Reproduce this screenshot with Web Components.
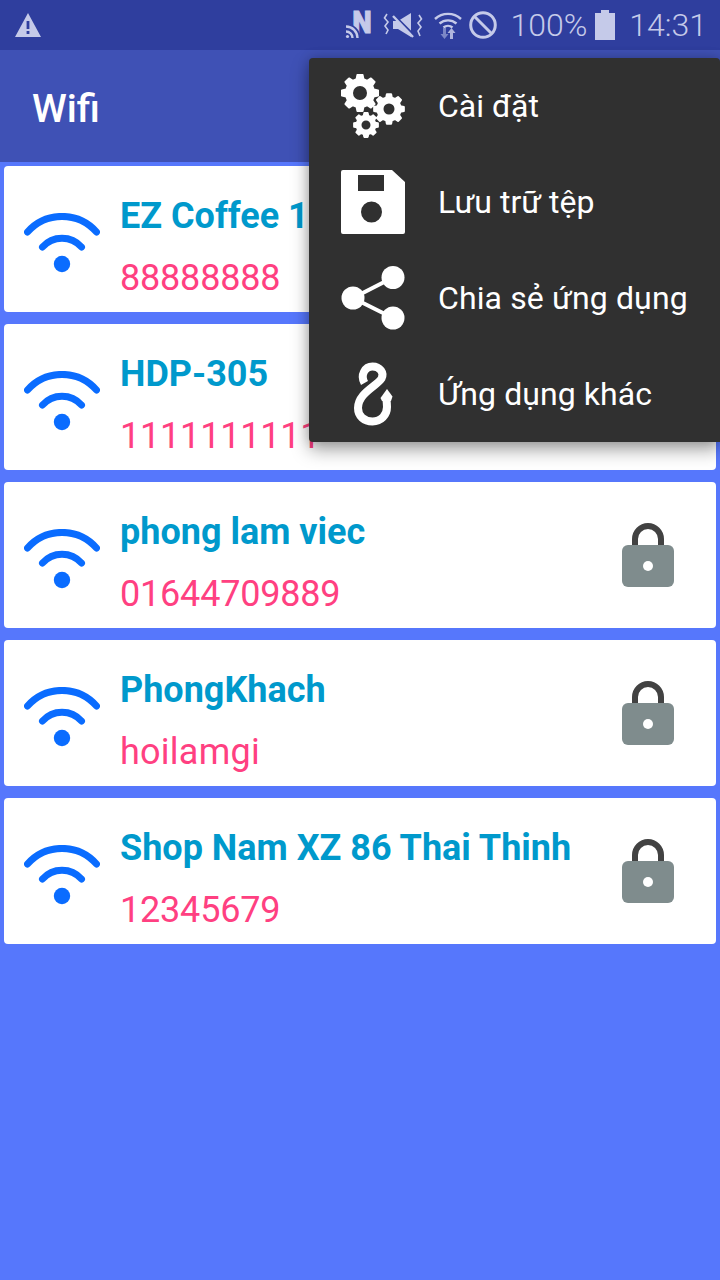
<!DOCTYPE html>
<html><head><meta charset="utf-8"><title>Wifi</title>
<style>
html,body{margin:0;padding:0;background:#5677fc}
body{width:720px;height:1280px;overflow:hidden;position:relative;font-family:Roboto,"Liberation Sans",sans-serif}
</style></head><body>
<wifi-app></wifi-app>
<script>
function gear(cx,cy,r,hole,teeth){
  const inner=r*0.78;let d='';const n=teeth;
  for(let i=0;i<n;i++){
    const a=i/n*Math.PI*2, w=Math.PI/n;
    const p=[[inner,a-w*.62],[r,a-w*.36],[r,a+w*.36],[inner,a+w*.62]];
    p.forEach((q,j)=>{d+=(i==0&&j==0?'M':'L')+(cx+q[0]*Math.cos(q[1])).toFixed(2)+' '+(cy+q[0]*Math.sin(q[1])).toFixed(2)});
  }
  d+='Z M'+(cx+hole)+' '+cy+'a'+hole+' '+hole+' 0 1 0 '+(-2*hole)+' 0a'+hole+' '+hole+' 0 1 0 '+(2*hole)+' 0Z';
  return d;
}
const ICONS={
 gears:`<svg width="64" height="64" viewBox="341 74 64 64"><path fill="#fff" fill-rule="evenodd" stroke="#fff" stroke-width="2" stroke-linejoin="round" d="${gear(360,93,18.2,8,8)} ${gear(389,109,15,6.5,8)} ${gear(366,125,12,5.5,8)}"/></svg>`,
 save:`<svg width="64" height="64" viewBox="341 170 64 64"><path fill="#fff" fill-rule="evenodd" d="M343 170H392L405 182V232a2 2 0 0 1-2 2H343a2 2 0 0 1-2-2V172a2 2 0 0 1 2-2Z M358 175V191H384V175Z M382 212a10.5 10.5 0 1 0-21 0a10.5 10.5 0 1 0 21 0Z"/></svg>`,
 share:`<svg width="64" height="64" viewBox="341 266 64 64"><g fill="#fff"><circle cx="393" cy="277.500" r="11.500"/><circle cx="353" cy="298" r="11.500"/><circle cx="393" cy="318" r="11.500"/></g><path d="M393 277.500L353 298L393 318" fill="none" stroke="#fff" stroke-width="4"/></svg>`,
 hook:`<svg width="64" height="64" viewBox="341 362 64 64"><path fill="none" stroke="#fff" stroke-width="8" d="M364.500 383C360 375 365 366.500 372.500 366.500C380 366.500 384.500 373 381.500 378.500C377 386 358 393 358 408C358 416 364 421.500 372.500 421.500C381 421.500 387 415 387 407C387 403 386.500 400 386 396"/><path fill="#fff" d="M380.500 398L387 389L392.500 396.500L391 401H382Z"/></svg>`,
 wifi:`<svg width="76" height="60" viewBox="0 0 76 60"><g fill="none" stroke="#0a6cff" stroke-width="7" stroke-linecap="round"><path d="M3.500 19A46 46 0 0 1 72.500 19"/><path d="M18.500 34A26 26 0 0 1 57.500 34"/></g><circle cx="38" cy="51" r="8.200" fill="#0a6cff"/></svg>`,
 lock:`<svg width="52" height="64" viewBox="0 0 52 64"><path d="M13 26V16a13 13 0 0 1 26 0V26" fill="none" stroke="#424242" stroke-width="6"/><rect x="0" y="22" width="52" height="42" rx="6" fill="#7f8c8d"/><circle cx="26" cy="43" r="5" fill="#fff"/></svg>`
};
function def(name,html,init){
  customElements.define(name,class extends HTMLElement{
    constructor(){super();this.attachShadow({mode:'open'}).innerHTML=html;}
    connectedCallback(){if(init)init(this);}
  });
}
const C='#c5cae9';
def('status-bar',`<style>
:host{display:flex;align-items:center;height:50px;background:#2f3e9e;color:${C};font:300 32px Roboto,sans-serif;padding:0 13px 0 15px;box-sizing:border-box}
svg{display:block;flex:none;overflow:visible}
.w{margin-right:auto}
span{line-height:50px;white-space:nowrap}
.n{margin-right:12px}.m{margin-right:12px}.wf{margin-right:7px}.b{margin-right:13px}.p{margin-right:8px}.bt{margin-right:14px}
</style>
<svg class="w" width="26" height="24" viewBox="0 0 26 24"><path fill="${C}" fill-rule="evenodd" d="M13 0L26 24H0Z M11.600 8V16H14.400V8Z M11.600 18V21H14.400V18Z"/></svg>
<svg class="n" width="26" height="28" viewBox="0 0 26 28" style="margin-top:-2px"><text x="6.500" y="23" font-family="Roboto,sans-serif" font-weight="900" font-size="32" fill="${C}" stroke="${C}" stroke-width="1.200" textLength="19" lengthAdjust="spacingAndGlyphs">N</text><path fill="#2f3e9e" d="M0 13.500A14.500 14.500 0 0 1 14.500 28H0Z"/><g fill="none" stroke="${C}" stroke-width="2.400"><path d="M0 16.500A11.500 11.500 0 0 1 11.500 28"/><path d="M0 21.500A6.500 6.500 0 0 1 6.500 28" /></g><circle cx="1.500" cy="26.500" r="1.600" fill="${C}"/></svg>
<svg class="m" width="38" height="24" viewBox="0 0 38 24"><g fill="none" stroke="${C}" stroke-width="1.600"><path d="M3 1L0.500 5L4 9L1 13L4 17L2 21"/><path d="M35 2L37.500 6L34 10L37 14L34 18L36 23"/></g><path fill="${C}" d="M9 8H14L27 0V24L14 16H9Z"/><path stroke="#2f3e9e" stroke-width="2" d="M11 3L31 23"/><path stroke="${C}" stroke-width="2.400" d="M9 3L29 24"/></svg>
<svg class="wf" width="28" height="27" viewBox="0 0 28 27"><g fill="none" stroke="${C}" stroke-width="2.400"><path d="M1 7A19 19 0 0 1 27 7"/><path d="M5.500 11.500A13 13 0 0 1 22.500 11.500"/><path d="M9.500 15.500A7 7 0 0 1 18.500 15.500"/></g><path fill="#7c87c6" d="M9 16H12V22H14.500L10.500 27L6.500 22H9Z"/><path fill="${C}" opacity=".85" d="M16 27H19V21H21.500L17.500 16L13.500 21H16Z"/></svg>
<svg class="b" width="28" height="28" viewBox="0 0 28 28"><circle cx="14" cy="14" r="12.300" fill="none" stroke="${C}" stroke-width="3"/><path stroke="${C}" stroke-width="3" d="M5 5L23 23"/></svg>
<span class="p">100%</span>
<svg class="bt" width="20" height="30" viewBox="0 0 20 30"><path fill="${C}" d="M6 0H14V3H20V30H0V3H6Z"/></svg>
<span>14:31</span>`);
def('app-bar',`<style>
:host{display:flex;align-items:center;height:112px;background:#3f51b5;color:#fff;padding:0 32px;box-sizing:border-box;font:500 39.5px Roboto,sans-serif;font-variant-ligatures:common-ligatures}
span{margin-top:5px}
</style><span><slot></slot></span>`);
def('wifi-card',`<style>
:host{display:flex;align-items:center;height:146px;background:#fff;border-radius:4px;box-sizing:border-box;padding:0 42px 0 20px;font-family:Roboto,sans-serif}
svg{display:block}
.i{display:block;margin-top:8px;flex:none}
.t{flex:1;min-width:0;margin-left:20px;display:flex;flex-direction:column;align-self:flex-start;padding-top:30px}
.a{font:700 36px/40px Roboto,sans-serif;color:#0099cc;white-space:nowrap}
.b{font:400 36px/42px Roboto,sans-serif;color:#ff4081;margin-top:21px;white-space:nowrap}
.l{flex:none;display:block}
</style>
<div class="i">${ICONS.wifi}</div>
<div class="t"><div class="a"><slot name="name"></slot></div><div class="b"><slot name="pass"></slot></div></div>
<div class="l">${ICONS.lock}</div>`);
def('wifi-list',`<style>:host{display:flex;flex-direction:column;gap:12px;padding:4px}</style><slot></slot>`);
def('menu-item',`<style>
:host{display:flex;align-items:center;height:96px;padding-left:32px;color:#fff;font:400 32px Roboto,sans-serif;white-space:nowrap}
.ic{width:64px;height:64px;flex:none;margin-right:33px}
svg{display:block}
</style><div class="ic" id="ic"></div><span><slot></slot></span>`,el=>{el.shadowRoot.getElementById('ic').innerHTML=ICONS[el.getAttribute('icon')]});
def('popup-menu',`<style>
:host{display:block;position:absolute;left:309px;top:58px;width:411px;height:384px;background:#303030;border-radius:4px 4px 0 4px;box-shadow:0 8px 18px rgba(0,0,0,.35),0 0 12px rgba(0,0,0,.18)}
</style><slot></slot>`);
def('wifi-app',`<style>:host{display:block;width:720px;height:1280px;position:relative;background:#5677fc}
.d{letter-spacing:-.2px}.w{letter-spacing:.25px}</style>
<status-bar></status-bar>
<app-bar>Wifi</app-bar>
<wifi-list>
<wifi-card><span slot="name">EZ Coffee 1</span><span slot="pass" class="d">88888888</span></wifi-card>
<wifi-card><span slot="name">HDP-305</span><span slot="pass" class="d">1111111111</span></wifi-card>
<wifi-card><span slot="name">phong lam viec</span><span slot="pass" class="d">01644709889</span></wifi-card>
<wifi-card><span slot="name">PhongKhach</span><span slot="pass" class="w">hoilamgi</span></wifi-card>
<wifi-card><span slot="name">Shop Nam XZ 86 Thai Thinh</span><span slot="pass" class="d">12345679</span></wifi-card>
</wifi-list>
<popup-menu>
<menu-item icon="gears">Cài đặt</menu-item>
<menu-item icon="save">Lưu trữ tệp</menu-item>
<menu-item icon="share" style="letter-spacing:.13px">Chia sẻ ứng dụng</menu-item>
<menu-item icon="hook" style="letter-spacing:.08px">Ứng dụng khác</menu-item>
</popup-menu>`);
</script>
</body></html>
